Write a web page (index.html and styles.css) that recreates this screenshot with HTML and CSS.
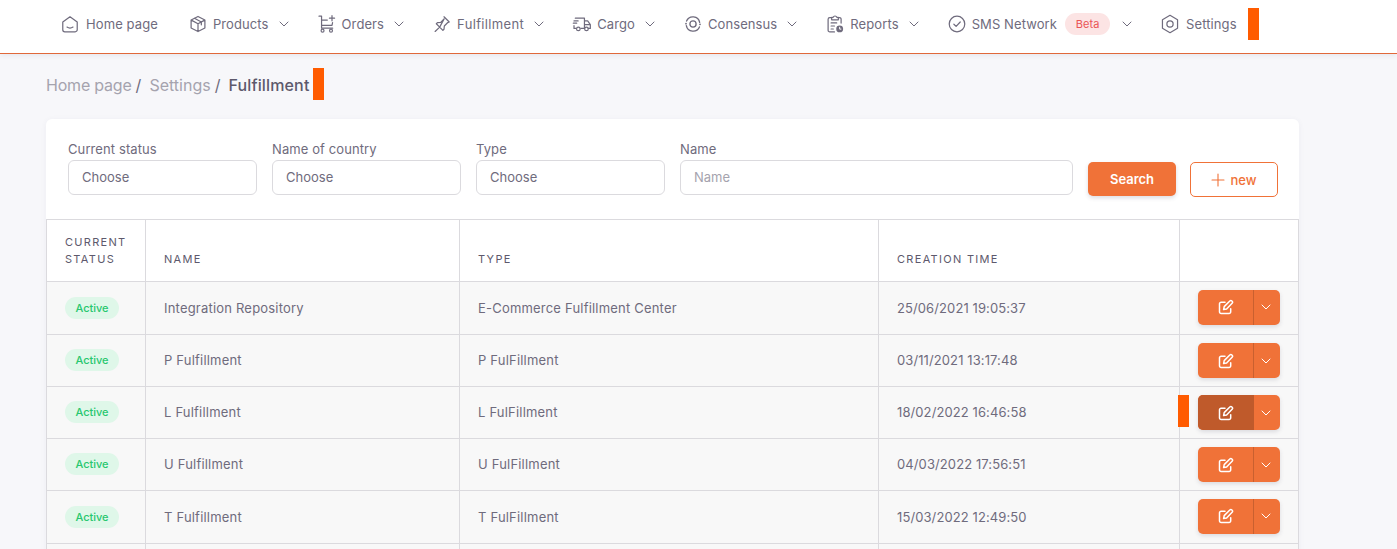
FILE: index.html
```html
<!DOCTYPE html>
<html lang="en">
<head>
<meta charset="utf-8">
<title>Fulfillment</title>
<link rel="stylesheet" href="styles.css">
</head>
<body>
<svg class="defs" width="0" height="0" aria-hidden="true">
  <defs>
    <symbol id="chev" viewBox="0 0 12 12"><path d="M2 4l4 4 4-4" fill="none" stroke="currentColor" stroke-width="1" stroke-linecap="round" stroke-linejoin="round"/></symbol>
    <symbol id="edit" viewBox="0 0 16 16"><g fill="none" stroke="currentColor" stroke-width="1.500" stroke-linecap="round" stroke-linejoin="round"><path d="M7 3.200H3.100A1.600 1.600 0 0 0 1.500 4.800v8A1.600 1.600 0 0 0 3.100 14.400h8a1.600 1.600 0 0 0 1.600-1.600V9.800"/><path d="M5.600 10.600l.6-3L11.800 2a1.500 1.500 0 0 1 2.100 0l.2.200a1.500 1.500 0 0 1 0 2.100L8.600 10z"/></g></symbol>
  </defs>
</svg>
<header class="topbar">
  <nav class="nav">
    <a class="nav-item nav-plain">
      <svg class="nav-icon" viewBox="0 0 18 18"><path d="M2.500 7.300 9 2.500l6.500 4.800v6.900a1.800 1.800 0 0 1-1.800 1.800H4.300a1.800 1.800 0 0 1-1.800-1.800z M6.300 11.800c1.500 1 3.900 1 5.400 0" fill="none" stroke="currentColor" stroke-width="1.100" stroke-linejoin="round" stroke-linecap="round"/></svg>
      <span>Home page</span>
    </a>
    <a class="nav-item">
      <svg class="nav-icon" viewBox="0 0 18 18"><path d="M9 2.200l6.200 3.200v7.200L9 15.800l-6.200-3.200V5.400zM3 5.500 9 8.800l6-3.300M9 8.800v7M5.800 3.800l6.200 3.400v2.500" fill="none" stroke="currentColor" stroke-width="1.100" stroke-linejoin="round" stroke-linecap="round"/></svg>
      <span>Products</span>
      <svg class="chev"><use href="#chev"/></svg>
    </a>
    <a class="nav-item">
      <svg class="nav-icon" viewBox="0 0 18 18"><path d="M1.800 2h2.300v10.800h10M4.100 5.500h5.200M4.100 10.200h9.400l.5-2.400M13.500 1.500v4.600M11.200 3.800h4.600" fill="none" stroke="currentColor" stroke-width="1.100" stroke-linejoin="round" stroke-linecap="round"/><circle cx="5" cy="15" r="1.300" fill="none" stroke="currentColor" stroke-width="1.100"/><circle cx="12.600" cy="15" r="1.300" fill="none" stroke="currentColor" stroke-width="1.100"/></svg>
      <span>Orders</span>
      <svg class="chev"><use href="#chev"/></svg>
    </a>
    <a class="nav-item nav-wide">
      <svg class="nav-icon" viewBox="0 0 18 18"><path d="M10.800 2.500l4.700 4.700-1.300.5-3.100 3.100-.3 2.900-1 1-2.900-2.900-4.100 3.900M6.900 11.800 3.900 8.800l1-1 2.900-.3 3.100-3.100z" fill="none" stroke="currentColor" stroke-width="1.100" stroke-linejoin="round" stroke-linecap="round"/></svg>
      <span>Fulfillment</span>
      <svg class="chev"><use href="#chev"/></svg>
    </a>
    <a class="nav-item">
      <svg class="nav-icon" viewBox="0 0 18 18"><path d="M3 3.800h8.200v9.200H8M3.500 13H1.800v-2.500M11.200 6.200h2.900l2.400 3.300V13h-1.800M11.200 9.500h5.300M1.800 6.200h3.700M1.200 8.300h3" fill="none" stroke="currentColor" stroke-width="1.100" stroke-linejoin="round" stroke-linecap="round"/><circle cx="5.700" cy="13.400" r="1.600" fill="none" stroke="currentColor" stroke-width="1.100"/><circle cx="13" cy="13.400" r="1.600" fill="none" stroke="currentColor" stroke-width="1.100"/></svg>
      <span>Cargo</span>
      <svg class="chev"><use href="#chev"/></svg>
    </a>
    <a class="nav-item">
      <svg class="nav-icon" viewBox="0 0 18 18"><path d="M15 7.600A6.200 6.200 0 0 0 3.200 6.400M3 10.400a6.200 6.200 0 0 0 11.800 1.200" fill="none" stroke="currentColor" stroke-width="1.200" stroke-linecap="round"/><circle cx="9" cy="9" r="2.800" fill="none" stroke="currentColor" stroke-width="1.200"/><circle cx="2.700" cy="8.700" r=".8" fill="currentColor"/><circle cx="15.300" cy="9.300" r=".8" fill="currentColor"/></svg>
      <span>Consensus</span>
      <svg class="chev"><use href="#chev"/></svg>
    </a>
    <a class="nav-item">
      <svg class="nav-icon" viewBox="0 0 18 18"><path d="M6 3.200H4.300A1.500 1.500 0 0 0 2.800 4.700v9.900a1.500 1.500 0 0 0 1.500 1.500h4.200M12 3.200h1a1.500 1.500 0 0 1 1.500 1.500v3.500M6 3h1.300a1.800 1.800 0 0 1 3.400 0H12v2.200H6zM5.500 8h5M5.500 10.800h3M5.500 13.500h2" fill="none" stroke="currentColor" stroke-width="1.100" stroke-linejoin="round" stroke-linecap="round"/><circle cx="13.200" cy="13.400" r="3.100" fill="currentColor"/><path d="M13.200 11.600v2h1.500" fill="none" stroke="#fff" stroke-width=".9"/></svg>
      <span>Reports</span>
      <svg class="chev"><use href="#chev"/></svg>
    </a>
    <a class="nav-item">
      <svg class="nav-icon" viewBox="0 0 18 18"><circle cx="9" cy="9" r="7" fill="none" stroke="currentColor" stroke-width="1.100"/><path d="M6.200 9.200l2 1.900L11.900 7.200" fill="none" stroke="currentColor" stroke-width="1.100" stroke-linecap="round" stroke-linejoin="round"/></svg>
      <span>SMS Network</span>
      <span class="beta">Beta</span>
      <svg class="chev"><use href="#chev"/></svg>
    </a>
    <a class="nav-item nav-plain">
      <svg class="nav-icon" viewBox="0 0 18 18"><path d="M9 1.200l6.800 3.900v7.800L9 16.800l-6.800-3.900V5.100z" fill="none" stroke="currentColor" stroke-width="1.100" stroke-linejoin="round"/><circle cx="9" cy="9" r="2.800" fill="none" stroke="currentColor" stroke-width="1.100"/></svg>
      <span>Settings</span>
    </a>
    <span class="marker marker-nav"></span>
  </nav>
</header>

<main class="page">
  <div class="crumbs">
    <span class="crumb crumb-home">Home page</span><span class="sep">/</span>
    <span class="crumb">Settings</span><span class="sep">/</span>
    <span class="crumb-current">Fulfillment</span>
    <span class="marker"></span>
  </div>

  <section class="card">
    <form class="filters">
      <label class="field field-select"><span class="field-label">Current status</span><span class="control">Choose</span></label>
      <label class="field field-select"><span class="field-label">Name of country</span><span class="control">Choose</span></label>
      <label class="field field-select"><span class="field-label">Type</span><span class="control">Choose</span></label>
      <label class="field field-name"><span class="field-label">Name</span><span class="control control-ph">Name</span></label>
      <button type="button" class="btn-search">Search</button>
      <button type="button" class="btn-new"><svg class="plus" viewBox="0 0 14 14"><path d="M7 1v12M1 7h12" fill="none" stroke="currentColor" stroke-width="1.100" stroke-linecap="round"/></svg>new</button>
    </form>

    <table class="grid">
      <colgroup><col class="c1"><col class="c2"><col class="c3"><col class="c4"><col class="c5"></colgroup>
      <thead>
        <tr><th>Current<br>status</th><th>Name</th><th>Type</th><th>Creation time</th><th></th></tr>
      </thead>
      <tbody>
        <tr class="r53"><td><span class="status">Active</span></td><td>Integration Repository</td><td>E-Commerce Fulfillment Center</td><td class="time">25/06/2021 19:05:37</td><td class="act"><div class="split"><span class="split-main"><svg class="edit"><use href="#edit"/></svg></span><span class="split-more"><svg class="chev-w"><use href="#chev"/></svg></span></div></td></tr>
        <tr><td><span class="status">Active</span></td><td>P Fulfillment</td><td>P FulFillment</td><td class="time">03/11/2021 13:17:48</td><td class="act"><div class="split"><span class="split-main"><svg class="edit"><use href="#edit"/></svg></span><span class="split-more"><svg class="chev-w"><use href="#chev"/></svg></span></div></td></tr>
        <tr><td><span class="status">Active</span></td><td>L Fulfillment</td><td>L FulFillment</td><td class="time">18/02/2022 16:46:58</td><td class="act"><span class="marker marker-row"></span><div class="split split-hover"><span class="split-main"><svg class="edit"><use href="#edit"/></svg></span><span class="split-more"><svg class="chev-w"><use href="#chev"/></svg></span></div></td></tr>
        <tr><td><span class="status">Active</span></td><td>U Fulfillment</td><td>U FulFillment</td><td class="time">04/03/2022 17:56:51</td><td class="act"><div class="split"><span class="split-main"><svg class="edit"><use href="#edit"/></svg></span><span class="split-more"><svg class="chev-w"><use href="#chev"/></svg></span></div></td></tr>
        <tr class="r53"><td><span class="status">Active</span></td><td>T Fulfillment</td><td>T FulFillment</td><td class="time">15/03/2022 12:49:50</td><td class="act"><div class="split"><span class="split-main"><svg class="edit"><use href="#edit"/></svg></span><span class="split-more"><svg class="chev-w"><use href="#chev"/></svg></span></div></td></tr>
        <tr><td></td><td></td><td></td><td></td><td></td></tr>
      </tbody>
    </table>
  </section>
</main>
</body>
</html>
```
FILE: styles.css
```css
* { box-sizing: border-box; }
html, body { height: 549px; overflow: hidden; }
body {
  margin: 0;
  background: #f7f7fa;
  color: #6f6b7d;
  font-family: Inter, "Noto Sans", sans-serif;
  font-size: 13px;
}
.defs { position: absolute; }

.topbar {
  height: 54px;
  background: #fff;
  border-bottom: 1px solid #e0683a;
  box-shadow: 0 2px 5px rgba(60, 60, 90, .08);
}
.nav { display: flex; align-items: center; height: 48px; padding-left: 60px; }
.nav-item { display: flex; align-items: center; margin-right: 27px; color: #6f6b7d; white-space: nowrap; letter-spacing: .1px; }
.nav-plain { margin-right: 30px; }
.nav-wide { letter-spacing: .35px; }
.nav-icon { width: 20px; height: 20px; margin-right: 5px; flex: none; }
.nav-plain .nav-icon { margin-right: 6px; }
.chev { width: 12px; height: 12px; margin-left: 9px; flex: none; }
.beta {
  display: inline-flex; align-items: center; justify-content: center;
  width: 45px; height: 22px; margin-left: 8px; margin-right: 2px;
  border-radius: 11px; background: #fce4e4; color: #ea5455; font-size: 11px;
}
.marker { display: inline-block; width: 11px; height: 32px; background: #ff5b00; flex: none; }
.marker-nav { margin-left: -19px; }

.page { padding: 0 98px 0 46px; }
.crumbs { display: flex; align-items: center; height: 32px; margin-top: 14px; font-size: 16px; color: #a5a3ae; }
.crumb, .sep, .crumb-current { padding-top: 2px; }
.crumb-home { letter-spacing: -.2px; }
.sep { color: #6f6b7d; margin: 0 8px 0 4px; }
.crumb-current { color: #5d596c; font-weight: 500; margin-right: 3px; letter-spacing: .15px; }

.card { margin-top: 19px; background: #fff; border-radius: 6px; box-shadow: 0 1px 6px rgba(60, 60, 90, .05); }
.filters { display: flex; align-items: flex-end; height: 100px; padding: 0 21px 24px 22px; }
.field { display: flex; flex-direction: column; flex: none; margin-right: 15px; }
.field-select { width: 189px; }
.field-name { width: 393px; }
.field-label { line-height: 18px; margin-bottom: 2px; letter-spacing: .1px; }
.control {
  display: flex; align-items: center; height: 35px; padding: 0 13px 2px;
  border: 1px solid #dbdade; border-radius: 6px; background: #fff; color: #6f6b7d;
}
.control-ph { color: #a5a3ae; }
.btn-search {
  flex: none; width: 88px; height: 34px; margin: 0 14px -1px 0;
  border: 0; border-radius: 5px; background: #f07238; color: #fff;
  font: 600 13px Inter, sans-serif; box-shadow: 0 2px 4px rgba(60, 60, 90, .18);
}
.btn-new {
  display: flex; align-items: center; justify-content: center; flex: none;
  width: 88px; height: 35px; margin-bottom: -2px; border: 1px solid #f07238; border-radius: 5px;
  background: #fff; color: #f07238; font: 500 13px Inter, sans-serif;
}
.plus { width: 14px; height: 14px; margin-right: 5px; }

.grid { width: 1252px; table-layout: fixed; border-collapse: collapse; }
.c1 { width: 99px; } .c2 { width: 314px; } .c3 { width: 419px; } .c4 { width: 301px; } .c5 { width: 119px; }
.grid th, .grid td { border: 1px solid #dbdade; padding: 0 18px; }
.grid th {
  height: 62px; vertical-align: bottom; padding-bottom: 13px;
  font-size: 11px; font-weight: 400; line-height: 17px; letter-spacing: 1.300px;
  text-transform: uppercase; text-align: left; color: #5d596c; background: #fff;
}
.grid th:first-child { padding-left: 18px; padding-right: 0; }
.grid td { height: 52px; padding-bottom: 2px; background: #f8f8f8; color: #6f6b7d; letter-spacing: .2px; }
.grid td.time { letter-spacing: .1px; }
.grid td.act { padding-bottom: 0; }
.grid .r53 td { height: 53px; padding-bottom: 0; }
.grid .r53 .split { margin-bottom: 2px; }
.status {
  display: inline-flex; align-items: center; justify-content: center;
  width: 54px; height: 22px; border-radius: 11px; background: #dff7e9; color: #28c76f;
  font-size: 11px; font-weight: 500; letter-spacing: 0;
}
.act { position: relative; }
.split { display: flex; width: 82px; height: 35px; border-radius: 5px; overflow: hidden; color: #fff; background: #f07238; box-shadow: 0 2px 4px rgba(60, 60, 90, .15); }
.split-main { display: flex; align-items: center; justify-content: center; width: 56px; border-right: 1px solid #c9602f; }
.split-more { display: flex; align-items: center; justify-content: center; flex: 1; padding-right: 2px; }
.split-hover .split-main { background: #bf5a2b; border-right-color: #bf5a2b; }
.edit { width: 16px; height: 16px; }
.chev-w { width: 12px; height: 12px; }
.marker-row { position: absolute; left: -2px; top: 8px; }
```
